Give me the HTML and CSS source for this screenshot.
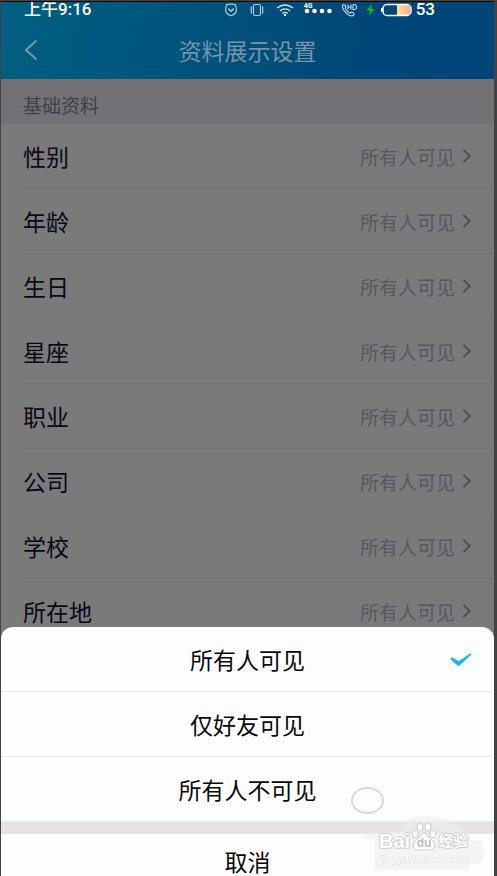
FILE: index.html
```html
<!DOCTYPE html>
<html lang="zh-CN">
<head>
<meta charset="utf-8">
<meta name="viewport" content="width=device-width, initial-scale=1">
<title>资料展示设置</title>
<link rel="stylesheet" href="styles.css">
</head>
<body>
<div class="screen">
  <header class="top">
    <div class="status">
      <span class="clock">上午<span class="digits">9:16</span></span>
      <div class="indicators">
        <svg width="14" height="14" viewBox="0 0 14 14" fill="none" stroke="#a9ccdd" stroke-width="1.2"><path d="M2.6 1.6Q7 .8 11.4 1.6Q12.6 5 12.3 8Q11.5 11.3 7 12.8Q2.5 11.3 1.7 8Q1.4 5 2.6 1.6Z"/><path d="M4.3 5.6L7 8.2L9.7 5.6" stroke-width="1.5"/></svg>
        <svg width="14" height="14" viewBox="0 0 14 14" fill="none" stroke="#a9ccdd" stroke-width="1.2"><rect x="3.5" y="1.5" width="7" height="11" rx="1.5"/><path d="M1.3 3.5V10.5M12.7 3.5V10.5"/></svg>
        <svg width="18" height="14" viewBox="0 0 18 14" fill="none" stroke="#d5e7ef" stroke-width="1.3"><path d="M1 5Q9-1 17 5M3.8 8Q9 3.6 14.2 8M6.3 10.5Q9 8.3 11.7 10.5"/><circle cx="9" cy="12" r="1.2" fill="#fff" stroke="none"/></svg>
        <span class="signal"><span class="net">4G</span><svg width="28" height="14" viewBox="0 0 28 14" fill="#fff"><circle cx="3" cy="8" r="2.3"/><circle cx="10.5" cy="8" r="2.3"/><circle cx="18" cy="8" r="2.3"/><circle cx="25.5" cy="8" r="2.3"/></svg></span>
        <svg class="call" width="17" height="14" viewBox="0 0 17 14" fill="none" stroke="#c5dbe7" stroke-width="1.1"><path d="M1.5 2.5Q3 .8 4.3 2.6Q5.3 4 4.2 5.2Q6 9 9 10.2Q10.2 8.6 12 9.5Q14 11 12.2 12.6Q9.8 14 6 10.8Q1 6.5 1.5 2.5Z"/><path d="M7 1.5V6.5M10 1.5V6.5M7 4H10M12 1.5V6.5Q15.5 7 15.5 4Q15.5 1 12 1.5"/></svg>
        <svg class="bolt" width="9" height="12" viewBox="0 0 9 12" fill="#18b629"><path d="M6 0L.5 6.5H4L2.8 12L8.5 5H5Z"/></svg>
        <svg width="31" height="14" viewBox="0 0 31 14"><defs><linearGradient id="charge"><stop stop-color="#ffe78b"/><stop offset="1" stop-color="#ffab96"/></linearGradient></defs><path d="M16 2H26Q29 2 29 5V9Q29 12 26 12H16Z" fill="url(#charge)"/><rect x="2" y="1.5" width="28" height="11" rx="4" fill="none" stroke="#fff" stroke-width="1.5"/><path d="M1 5V9" stroke="#fff" stroke-width="2"/></svg>
        <span class="digits">53</span>
      </div>
    </div>
    <div class="titlebar">
      <button class="back" aria-label="返回"><svg width="14" height="22" viewBox="0 0 14 22" fill="none" stroke="#7c9aac" stroke-width="2"><path d="M12.5 1.5L2 11L12.5 20.5"/></svg></button>
      <h1>资料展示设置</h1>
    </div>
  </header>
  <main>
    <h2>基础资料</h2>
    <ul class="rows">
      <li><button class="row"><span>性别</span><span class="value">所有人可见<i class="chevron"></i></span></button></li>
      <li><button class="row"><span>年龄</span><span class="value">所有人可见<i class="chevron"></i></span></button></li>
      <li><button class="row"><span>生日</span><span class="value">所有人可见<i class="chevron"></i></span></button></li>
      <li><button class="row"><span>星座</span><span class="value">所有人可见<i class="chevron"></i></span></button></li>
      <li><button class="row"><span>职业</span><span class="value">所有人可见<i class="chevron"></i></span></button></li>
      <li><button class="row"><span>公司</span><span class="value">所有人可见<i class="chevron"></i></span></button></li>
      <li><button class="row"><span>学校</span><span class="value">所有人可见<i class="chevron"></i></span></button></li>
      <li><button class="row"><span>所在地</span><span class="value">所有人可见<i class="chevron"></i></span></button></li>
    </ul>
  </main>
  <div class="sheet" role="dialog" aria-label="可见范围">
    <button class="option">所有人可见<svg class="check" width="22" height="14" viewBox="0 0 22 14" fill="#12b7f5"><path d="M.6 5.2Q1.5 4 2.8 4.7L8.8 8.3L19.7 .7Q21 .3 21.4 1.5L9.8 12.3Q8.500 13.400 7.300 12.300L.8 6.600Z"/></svg></button>
    <button class="option">仅好友可见</button>
    <button class="option">所有人不可见</button>
    <button class="cancel">取消</button>
    <span class="touch"></span>
    <div class="watermark">
      <svg class="cloud" width="124" height="56" viewBox="0 0 124 56"><path d="M0 21Q10 15 40 16Q43 0 66 0Q96 0 109 22Q110 26 120 24Q124 32 124 38Q124 44 119 48H109V54H15V24Z" fill="#efeff0" fill-opacity=".6"/></svg>
      <div class="brand"><span>Bai</span><svg width="26" height="29" viewBox="0 0 26 29" fill="#fff" stroke="#cdcdcf" stroke-width="1"><ellipse cx="4" cy="12" rx="3" ry="4"/><ellipse cx="9" cy="5" rx="3" ry="4"/><ellipse cx="17" cy="5" rx="3" ry="4"/><ellipse cx="22" cy="12" rx="3" ry="4"/><path d="M13 11Q16 11 18 15L23 20Q26 28 19 28H7Q0 28 3 20L8 15Q10 11 13 11Z"/><text x="13" y="25" text-anchor="middle" class="du">du</text></svg><span class="cn">经验</span></div>
      <div class="site">jingyan.baidu.com</div>
    </div>
  </div>
</div>
</body>
</html>
```
FILE: styles.css
```css
* { box-sizing: border-box; }

html { background: #434345; }

body {
  margin: 0;
  height: 100vh;
  overflow: hidden;
  padding: 1px 3px 0 1px;
  font-family: "Liberation Sans", "Noto Sans CJK SC", sans-serif;
}

button {
  border: 0;
  padding: 0;
  background: none;
  font: inherit;
  color: inherit;
}

.screen {
  position: relative;
  height: 100%;
  overflow: hidden;
  border-top: 1px solid #050505;
  background: #7a7a7a;
}

.top {
  height: 77px;
  background: linear-gradient(100deg, #006081, #00527b 42%, #004678 75%, #004578);
}

.status {
  display: flex;
  justify-content: space-between;
  height: 16px;
  padding: 0 59px 0 23px;
  font-size: 17px;
  line-height: 15px;
  color: #fff;
}

.clock { font-weight: 500; }

.digits {
  font-family: Roboto, sans-serif;
  font-size: 17px;
  font-weight: 500;
}

.indicators {
  display: flex;
  align-items: center;
  height: 15px;
}

.indicators > * + * { margin-left: 12px; }
.indicators > .signal { margin-left: 10px; }
.indicators > .call { margin-left: 9px; }
.indicators > .bolt { margin-left: 8px; }
.indicators > .bolt + * { margin-left: 6px; }
.indicators > .digits { margin-left: 4px; }

.signal {
  position: relative;
  height: 14px;
}

.signal svg { display: block; }

.net {
  position: absolute;
  left: 0;
  top: -1px;
  font: bold 7px/8px Roboto, sans-serif;
}

.titlebar {
  display: grid;
  grid-template-columns: 60px 1fr 60px;
  align-items: center;
  height: 64px;
}

.back {
  display: flex;
  padding-left: 23px;
}

h1 {
  margin: 0;
  text-align: center;
  font-size: 23px;
  font-weight: 400;
  color: #7795a9;
}

h2 {
  margin: 0;
  height: 45px;
  padding: 4px 22px 0;
  background: #727275;
  font-size: 19px;
  line-height: 48px;
  font-weight: 400;
  color: #3f3f49;
}

.rows {
  margin: 0;
  padding: 0 0 0 22px;
  list-style: none;
}

.row {
  display: flex;
  align-items: center;
  justify-content: space-between;
  width: 100%;
  height: 65px;
  padding-right: 25px;
  border-bottom: 1px solid #737375;
  font-size: 23px;
  color: #080819;
}

.value {
  display: flex;
  align-items: center;
  gap: 4px;
  font-size: 19px;
  color: #57575f;
}

.chevron {
  width: 10px;
  height: 10px;
  border: solid #505057;
  border-width: 2px 2px 0 0;
  transform: rotate(45deg);
}

.sheet {
  position: absolute;
  inset: auto 0 0;
  border-radius: 12px 12px 0 0;
  background: #fdfdfd;
  font-size: 23px;
  color: #080808;
}

.option {
  position: relative;
  display: block;
  width: 100%;
  height: 65px;
  border-bottom: 1px solid #ececec;
}

.check {
  position: absolute;
  right: 22px;
  top: 26px;
}

.cancel {
  display: block;
  width: 100%;
  height: 54px;
  padding-top: 16px;
  border-top: 12px solid #e5e3e4;
  line-height: 26px;
}

.touch {
  position: absolute;
  right: 110px;
  bottom: 62px;
  width: 33px;
  height: 27px;
  border: 2px solid #d5d5f0;
  border-radius: 50%;
}

.watermark {
  position: absolute;
  right: 10px;
  bottom: 4px;
  width: 124px;
  height: 56px;
  color: #fff;
  text-shadow: 1px 0 #cdcdcf, -1px 0 #cdcdcf, 0 1px #cdcdcf, 0 -1px #cdcdcf;
  pointer-events: none;
}

.cloud {
  position: absolute;
  inset: 0;
}

.brand {
  position: relative;
  display: flex;
  align-items: flex-end;
  gap: 1px;
  height: 35px;
  padding-left: 19px;
  font-size: 20px;
  line-height: 20px;
  font-weight: 700;
}

.cn {
  font-size: 15px;
}

.du {
  font: bold 12px "Liberation Sans", sans-serif;
  fill: #bcbcbe;
  stroke: none;
  text-shadow: none;
}

.site {
  position: relative;
  padding-left: 20px;
  font-size: 11px;
  line-height: 14px;
  text-shadow: 1px 0 #e2e2e3, 0 1px #e2e2e3;
}
```
